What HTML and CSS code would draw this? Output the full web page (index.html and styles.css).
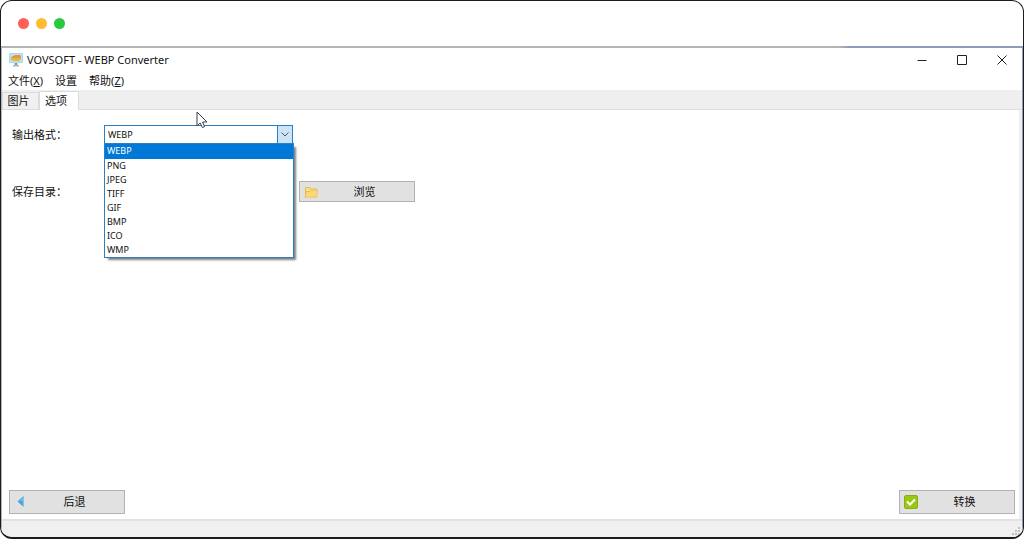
FILE: index.html
```html
<!DOCTYPE html>
<html lang="zh-CN">
<head>
<meta charset="utf-8">
<meta name="viewport" content="width=device-width, initial-scale=1">
<title>VOVSOFT - WEBP Converter</title>
<link rel="stylesheet" href="styles.css">
</head>
<body>
<div class="frame">
  <div class="frame-bar">
    <span class="dot dot-red"></span>
    <span class="dot dot-yellow"></span>
    <span class="dot dot-green"></span>
  </div>
  <div class="app">
    <header class="title-bar">
      <svg class="app-icon" viewBox="0 0 14 14" aria-hidden="true">
        <rect x="0" y="0" width="14" height="10" rx="1" fill="#9edcf3"/>
        <rect x="1" y="1" width="12" height="8" fill="#b9e6f2"/>
        <path d="M3 3.500l3-1.500h5l1 2v1H2z" fill="#f58a4b"/>
        <path d="M2 5h10v1.500L10 8H4L2 7z" fill="#f0b53c"/>
        <path d="M5 5.500h4l1 1.500H6z" fill="#b7c84a"/>
        <path d="M5.500 10h3v2h-3z" fill="#8da0b4"/>
        <rect x="4" y="12" width="6" height="1.500" fill="#aab6c2"/>
      </svg>
      <h1 class="title">VOVSOFT - WEBP Converter</h1>
      <div class="window-controls">
        <button class="window-button" type="button" aria-label="最小化">
          <svg viewBox="0 0 10 10"><path d="M0.500 5.500h9"/></svg>
        </button>
        <button class="window-button" type="button" aria-label="最大化">
          <svg viewBox="0 0 10 10"><path d="M.5.5h9v9h-9z"/></svg>
        </button>
        <button class="window-button" type="button" aria-label="关闭">
          <svg viewBox="0 0 10 10"><path d="M.5.5l9 9M9.500.5l-9 9"/></svg>
        </button>
      </div>
    </header>
    <nav class="menu">
      <button class="menu-item" type="button">文件(<u>X</u>)</button>
      <button class="menu-item" type="button">设置</button>
      <button class="menu-item" type="button">帮助(<u>Z</u>)</button>
    </nav>
    <div class="tabs" role="tablist">
      <button class="tab" type="button" role="tab" aria-selected="false">图片</button>
      <button class="tab tab-active" type="button" role="tab" aria-selected="true">选项</button>
    </div>
    <main class="page">
      <form class="options">
        <div class="row">
          <label class="label" for="format">输出格式：</label>
          <div class="combo">
            <select class="combo-select" id="format">
              <option selected>WEBP</option>
              <option>PNG</option>
              <option>JPEG</option>
              <option>TIFF</option>
              <option>GIF</option>
              <option>BMP</option>
              <option>ICO</option>
              <option>WMP</option>
            </select>
            <span class="combo-arrow"><svg viewBox="0 0 8 5"><path d="M.5.5L4 4 7.500.5"/></svg></span>
            <ul class="list" role="listbox" aria-label="输出格式">
              <li class="list-item list-item-active" role="option" aria-selected="true">WEBP</li>
              <li class="list-item" role="option">PNG</li>
              <li class="list-item" role="option">JPEG</li>
              <li class="list-item" role="option">TIFF</li>
              <li class="list-item" role="option">GIF</li>
              <li class="list-item" role="option">BMP</li>
              <li class="list-item" role="option">ICO</li>
              <li class="list-item" role="option">WMP</li>
            </ul>
          </div>
        </div>
        <div class="row">
          <label class="label" for="folder">保存目录：</label>
          <input class="folder" id="folder" type="text">
          <button class="button button-browse" type="button">
            <svg class="button-icon" viewBox="0 0 14 14" aria-hidden="true">
              <path d="M1 12V3q0-1 1-1h3.500l1 1.500H12q1 0 1 1V12z" fill="#e9b850"/>
              <path d="M2 3h3l1 1.500h6V6H2z" fill="#fbe08a"/>
              <path d="M.8 12.200L2.600 6.500H6L7 5.500h6.800L12.500 12.200z" fill="#fbd877" stroke="#e8b959" stroke-width=".6"/>
            </svg>
            <span class="button-text">浏览</span>
          </button>
        </div>
      </form>
      <div class="actions">
        <button class="button" type="button">
          <svg class="button-icon" viewBox="0 0 14 14" aria-hidden="true">
            <path d="M3.500 6.500L9.500 1v11z" fill="#49a5dc"/>
            <path d="M6 6L9.500 2v4z" fill="#78c1ea"/>
          </svg>
          <span class="button-text">后退</span>
        </button>
        <button class="button" type="button">
          <svg class="button-icon" viewBox="0 0 14 14" aria-hidden="true">
            <rect x=".5" y=".5" width="13" height="13" rx="1.500" fill="#98c80f" stroke="#84b111"/>
            <path d="M3 6.500l3 3L11 4.500" fill="none" stroke="#fff" stroke-width="2"/>
          </svg>
          <span class="button-text">转换</span>
        </button>
      </div>
    </main>
    <footer class="status">
      <svg class="grip" viewBox="0 0 8 8" aria-hidden="true">
        <path d="M6 0h2v2H6zM3 3h2v2H3zM6 3h2v2H6zM0 6h2v2H0zM3 6h2v2H3zM6 6h2v2H6z" fill="#c0c0c0"/>
      </svg>
    </footer>
  </div>
  <svg class="pointer" viewBox="0 0 12 18" aria-hidden="true">
    <path d="M1 1v14l3.200-3 2.200 4.600 2.200-1L6.500 11H11z" fill="#fff" stroke="#3c3c46"/>
  </svg>
</div>
</body>
</html>
```
FILE: styles.css
```css
* {
  box-sizing: border-box;
}

body {
  margin: 0;
  background: #fff;
  color: #111;
  font: 11px/14px "Noto Sans", "Noto Sans CJK SC", sans-serif;
}

button,
input,
select {
  margin: 0;
  color: inherit;
  font: inherit;
}

.frame {
  position: relative;
  display: flex;
  flex-direction: column;
  min-height: 100vh;
  overflow: hidden;
  border: 1px solid #1c1c20;
  border-bottom-width: 2px;
  border-radius: 12px;
  background: #fff;
}

.frame-bar {
  display: flex;
  align-items: center;
  gap: 7px;
  height: 45px;
  padding-left: 17px;
}

.dot {
  width: 11px;
  height: 11px;
  border-radius: 50%;
}

.dot-red {
  background: #ff5f57;
}

.dot-yellow {
  background: #febc2e;
}

.dot-green {
  background: #28c840;
}

.app {
  display: flex;
  flex: 1;
  flex-direction: column;
  border: solid;
  border-width: 2px 1px 0;
  border-image: linear-gradient(90deg, #b4b4b4 82%, #8f9bb8 83%) 2 1 0 1;
}

.title-bar {
  display: flex;
  align-items: center;
  height: 24px;
  padding-left: 7px;
}

.app-icon {
  width: 14px;
  height: 14px;
}

.title {
  flex: 1;
  margin: 0 0 0 4px;
  font-size: 11px;
  font-weight: 400;
}

.window-controls {
  display: flex;
}

.window-button {
  display: flex;
  align-items: center;
  justify-content: center;
  width: 40px;
  height: 24px;
  padding: 0;
  border: 0;
  background: none;
}

.window-button svg {
  width: 10px;
  height: 10px;
  fill: none;
  stroke: #222;
}

.menu {
  display: flex;
  align-items: center;
  gap: 12px;
  height: 18px;
  padding-left: 6px;
}

.menu-item {
  padding: 0;
  border: 0;
  background: none;
}

.tabs {
  display: flex;
  align-items: flex-end;
  height: 20px;
  border-bottom: 1px solid #dcdcdc;
  background: #efefef;
}

.tab {
  width: 37px;
  height: 17px;
  padding: 0 4px 0 0;
  border: 1px solid #dcdcdc;
  border-bottom: 0;
  background: #f0f0f0;
}

.tab-active {
  width: 40px;
  height: 19px;
  margin-bottom: -1px;
  padding: 0 6px 1px 0;
  background: #fff;
}

.page {
  display: flex;
  flex: 1;
  flex-direction: column;
  justify-content: space-between;
  padding: 14px 4px 5px 7px;
  border-right: 3px solid #efefef;
}

.options {
  display: flex;
  flex-direction: column;
  gap: 36px;
  padding-left: 3px;
}

.row {
  display: flex;
  align-items: center;
  height: 21px;
}

.label {
  width: 92px;
}

.combo {
  position: relative;
  display: flex;
  width: 189px;
  height: 19px;
  border: 1px solid #2a80c4;
}

.combo-select {
  flex: 1;
  padding: 0 3px;
  border: 0;
  appearance: none;
  background: #fff;
  font-size: 9px;
}

.combo-arrow {
  display: flex;
  align-items: center;
  justify-content: center;
  width: 15px;
  border-left: 1px solid #2a80c4;
  background: #cce4f7;
}

.combo-arrow svg {
  width: 8px;
  height: 5px;
  fill: none;
  stroke: #555;
}

.list {
  position: absolute;
  z-index: 1;
  top: 17px;
  left: -1px;
  width: 190px;
  margin: 0;
  padding: 0;
  border: 1px solid #2a80c4;
  background: #fff;
  box-shadow: 3px 3px 2px -1px #00000080;
  font-size: 9px;
  list-style: none;
}

.list-item {
  height: 14px;
  padding-left: 2px;
}

.list-item-active {
  height: 15px;
  background: #0078d7;
  color: #fff;
}

.folder {
  width: 189px;
  height: 20px;
  padding: 0 3px;
  border: 1px solid #8a8a8a;
}

.button {
  display: flex;
  align-items: center;
  width: 116px;
  height: 24px;
  padding: 0 3px 0 4px;
  border: 1px solid #b2b2b2;
  background: #e1e1e1;
}

.button-browse {
  height: 21px;
  margin-left: 6px;
}

.button-icon {
  width: 14px;
  height: 14px;
}

.button-text {
  flex: 1;
  text-align: center;
}

.actions {
  display: flex;
  justify-content: space-between;
}

.status {
  display: flex;
  align-items: flex-end;
  justify-content: flex-end;
  height: 18px;
  padding: 2px;
  border-top: 2px solid #e2e2e2;
  background: #f0f0f0;
}

.grip {
  width: 8px;
  height: 8px;
}

.pointer {
  position: absolute;
  z-index: 2;
  top: 110px;
  left: 195px;
  width: 12px;
  height: 18px;
}
```
